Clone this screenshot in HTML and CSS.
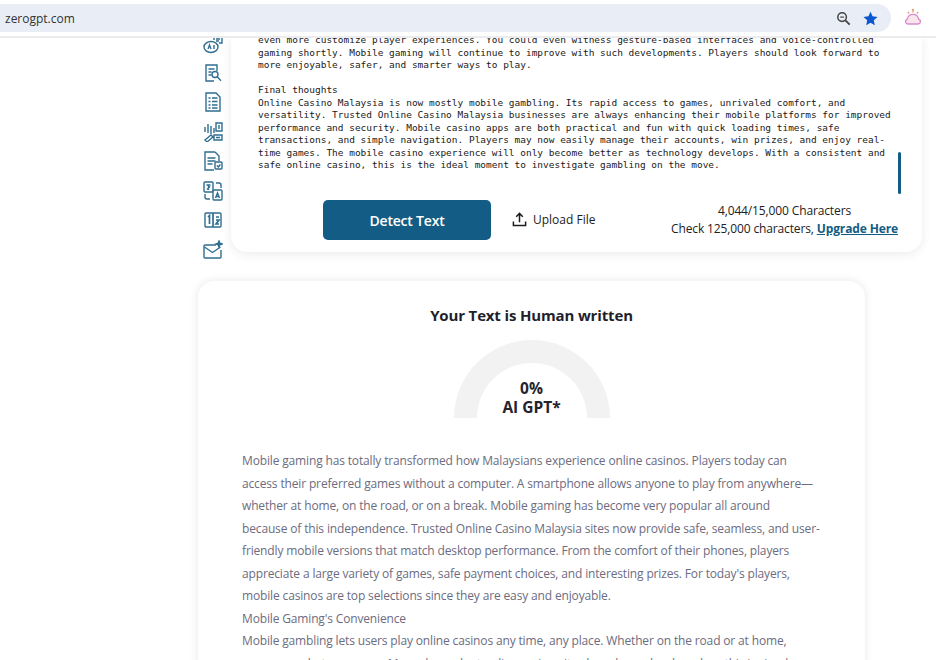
FILE: index.html
```html
<!DOCTYPE html>
<html>
<head>
    <title>ZeroGPT</title>
    <link rel="stylesheet" href="styles.css">
</head>
<body>
    <header class="toolbar">
        <div class="address">
            <span class="url">zerogpt.com</span>
            <svg class="zoom-icon" viewBox="0 0 16 16" width="15" height="15"><circle cx="6.5" cy="6.5" r="4.6" fill="none" stroke="#444" stroke-width="1.6"/><path d="M10 10l4.6 4.6" stroke="#444" stroke-width="2"/><path d="M4.4 6.5h4.2" stroke="#444" stroke-width="1.2"/></svg>
            <svg class="star-icon" viewBox="0 0 16 16" width="15" height="15"><path d="M8 .8l2.2 4.9 5.3.6-4 3.6 1.1 5.3L8 12.500l-4.600 2.700 1.100-5.300-4-3.600 5.300-.6z" fill="#0b57d0"/></svg>
        </div>
        <svg class="ext-icon" viewBox="0 0 18 18" width="18" height="18">
            <path d="M4 16h10a2.500 2.500 0 0 0 .6-4.900 5.700 5.700 0 0 0-11.200 0A2.500 2.500 0 0 0 4 16z" fill="#f8e6ea" stroke="#d98ad0" stroke-width="1.300"/>
            <path d="M9 2v2.500M3.800 4l1.300 1.500M14.200 4l-1.300 1.500" stroke="#e8996e" stroke-width="1.200"/>
            <circle cx="9" cy="1.800" r="1" fill="#e8996e"/>
        </svg>
    </header>

    <main class="page">
        <section class="tool-row">
            <nav class="side-icons">
                <svg viewBox="0 0 20 20"><ellipse cx="8" cy="12" rx="7" ry="5.500"/><path d="M11 5V2h8v6h-3"/><path d="M13 4h4M13 6h3M5 14l1.500-4 1.500 4M11 10v4"/></svg>
                <svg viewBox="0 0 20 20"><path d="M14 8V2H3v16h8"/><path d="M5.500 6h6M5.500 9h3M5.500 12h3"/><circle cx="12" cy="11.500" r="3"/><path d="M14.200 13.700l3.800 4"/></svg>
                <svg viewBox="0 0 20 20"><path d="M3 1h10l4 4v14H3z"/><path d="M5.500 6h2M5.500 9.500h2M5.500 13h2M5.500 16h2M9 6h5.500M9 9.500h5.500M9 13h5.500M9 16h5.500"/></svg>
                <svg viewBox="0 0 20 20"><path d="M13 1h6v8h-6zM16 3v4M5 2v9M8 4v8M2 5v5M11 6v5"/><path d="M2 18l6-5 2 2-6 5zM11 13h8v5h-8zM13 15.500h4"/></svg>
                <svg viewBox="0 0 20 20"><path d="M12 1H2v18h9M12 1l4 4v5"/><path d="M4.500 7h8M4.500 10h8M4.500 13h5"/><rect x="12" y="11" width="7" height="7" rx="1"/><path d="M13.800 14.500l1.600 1.500 2-2.500"/></svg>
                <svg viewBox="0 0 20 20"><rect x="1" y="1" width="9" height="10" rx="1"/><rect x="10" y="9" width="9" height="10" rx="1"/><path d="M3.500 4h4M5.500 4v5M4 8.500l3-3M12.500 17l2-5 2 5M13.200 15.500h2.600M13 2h3a2 2 0 0 1 2 2v3M2 13v3a2 2 0 0 0 2 2h3"/></svg>
                <svg viewBox="0 0 20 20"><rect x="2" y="3" width="16" height="14" rx="1"/><path d="M10 3v14M5 7l1.500-1.500V14M13 7h3M13 10h3l-3 4h3" stroke-width="1.700"/></svg>
                <svg viewBox="0 0 20 20"><path d="M13 5H2a1 1 0 0 0-1 1v11a1 1 0 0 0 1 1h15a1 1 0 0 0 1-1v-7"/><path d="M1.500 7l8 5.500 8-5.500"/><path d="M16 1l.8 2.200L19 4l-2.200.8L16 7l-.8-2.200L13 4l2.200-.8z" fill="#1a5f85"/></svg>
            </nav>

            <div class="tool-card">
                <div class="input-text">even more customize player experiences. You could even witness gesture-based interfaces and voice-controlled
gaming shortly. Mobile gaming will continue to improve with such developments. Players should look forward to
more enjoyable, safer, and smarter ways to play.

Final thoughts
Online Casino Malaysia is now mostly mobile gambling. Its rapid access to games, unrivaled comfort, and
versatility. Trusted Online Casino Malaysia businesses are always enhancing their mobile platforms for improved
performance and security. Mobile casino apps are both practical and fun with quick loading times, safe
transactions, and simple navigation. Players may now easily manage their accounts, win prizes, and enjoy real-
time games. The mobile casino experience will only become better as technology develops. With a consistent and
safe online casino, this is the ideal moment to investigate gambling on the move.</div>
                <div class="scroll-thumb"></div>

                <div class="actions">
                    <button class="detect-btn">Detect Text</button>
                    <a class="upload">
                        <svg viewBox="0 0 16 16" width="15" height="15"><path d="M8 11V2M4.500 5L8 1.500 11.500 5M1.500 10v4.500h13V10" fill="none" stroke="#1d1d1d" stroke-width="1.600"/></svg>
                        Upload File
                    </a>
                    <div class="counts">
                        <div class="count-line">4,044/15,000 Characters</div>
                        <div>Check 125,000 characters, <a class="upgrade">Upgrade Here</a></div>
                    </div>
                </div>
            </div>
        </section>

        <section class="result-card">
            <h2>Your Text is Human written</h2>
            <div class="gauge">
                <div class="gauge-label">0%<br>AI GPT*</div>
            </div>
            <p class="result-text">Mobile gaming has totally transformed how Malaysians experience online casinos. Players today can<br>
            access their preferred games without a computer. A smartphone allows anyone to play from anywhere—<br>
            whether at home, on the road, or on a break. Mobile gaming has become very popular all around<br>
            because of this independence. Trusted Online Casino Malaysia sites now provide safe, seamless, and user-<br>
            friendly mobile versions that match desktop performance. From the comfort of their phones, players<br>
            appreciate a large variety of games, safe payment choices, and interesting prizes. For today's players,<br>
            mobile casinos are top selections since they are easy and enjoyable.<br>
            Mobile Gaming's Convenience<br>
            Mobile gambling lets users play online casinos any time, any place. Whether on the road or at home,<br>
            anyone can bet on games. Many dependent online casino sites have been developed, so this is simple</p>
        </section>
    </main>
</body>
</html>
```
FILE: styles.css
```css
* { box-sizing: border-box; }
html, body { margin: 0; height: 100%; }
body { width: 936px; height: 660px; overflow: hidden; background: #fff; font-family: "Open Sans", "Noto Sans", sans-serif; color: #24242e; }

.toolbar { height: 38px; padding-top: 4px; display: flex; align-items: flex-start; border-bottom: 2px solid #ececee; background: #fff; }
.address { width: 891px; height: 28px; background: #e9eef6; border-radius: 0 15px 15px 0; display: flex; align-items: center; padding: 0 13px 0 5px; }
.url { flex: 1; font-size: 12px; color: #333; }
.zoom-icon { margin-right: 12px; }
.ext-icon { margin: 4px 0 0 13px; }

.page { height: 622px; overflow: hidden; }

.tool-row { display: flex; height: 214px; padding-left: 203px; }
.side-icons { width: 28px; display: flex; flex-direction: column; gap: 9.500px; margin-top: -3px; }
.side-icons svg { flex-shrink: 0; width: 20px; height: 20px; fill: none; stroke: #1a5f85; stroke-width: 1.400; opacity: .9; }
.side-icons svg:first-child { margin-bottom: -2px; }

.tool-card { position: relative; width: 691px; height: 214px; background: #fff; border-radius: 0 0 16px 16px; box-shadow: 0 2px 10px rgba(60,60,90,.1); overflow: hidden; }
.input-text { margin: -4px 0 0 27px; height: 142px; font-family: "DejaVu Sans Mono", monospace; font-size: 9.470px; line-height: 12.500px; white-space: pre; color: #1a1a1a; }
.scroll-thumb { position: absolute; left: 667px; top: 114px; width: 3px; height: 42px; border-radius: 2px; background: #125c85; }

.actions { display: flex; align-items: flex-start; margin-top: 24px; padding-left: 92px; }
.detect-btn { width: 168px; height: 40px; border: none; border-radius: 5px; background: #125c85; color: #fff; font-family: inherit; font-size: 14px; font-weight: 600; letter-spacing: -.2px; }
.upload { display: flex; align-items: center; gap: 6px; margin: 11px 0 0 21px; font-size: 12px; color: #222; }
.counts { flex: 1; margin: 2px 24px 0 0; text-align: right; font-size: 12px; line-height: 18px; letter-spacing: -.13px; color: #222; }
.count-line { padding-right: 47px; }
.upgrade { font-weight: 700; color: #125c85; text-decoration: underline; }

.result-card { width: 667px; height: 400px; margin: 29px 0 0 198px; padding: 23px 44px 0; background: #fff; border-radius: 16px 16px 0 0; box-shadow: 0 0 8px rgba(60,60,90,.12); }
.result-card h2 { margin: 0; text-align: center; font-size: 15px; line-height: 22px; font-weight: 700; letter-spacing: -.15px; color: #1f1f2c; }
.gauge { position: relative; width: 156px; height: 78px; margin: 14px auto 0; border: 23px solid #f2f2f2; border-bottom: 0; border-radius: 78px 78px 0 0; }
.gauge-label { position: absolute; left: -23px; right: -23px; bottom: 1px; text-align: center; font-size: 15.500px; line-height: 19px; font-weight: 700; color: #24242e; }
.result-text { margin: 32px 0 0; font-size: 12px; line-height: 22.500px; letter-spacing: -.15px; white-space: nowrap; color: #6c6c80; }
```
